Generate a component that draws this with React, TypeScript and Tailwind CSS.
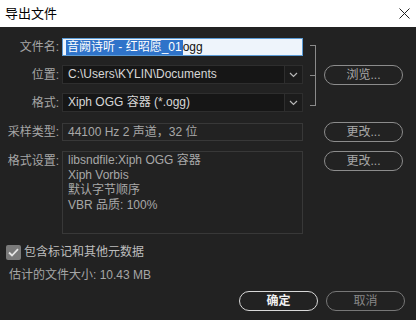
import React from "react";

const font = { fontFamily: '"Liberation Sans", "Noto Sans CJK SC", sans-serif' };

function Chevron() {
  return (
    <svg width="9" height="6" viewBox="0 0 9 6" fill="none">
      <path d="M1 1 L4.5 4.5 L8 1" stroke="#b8b8b8" strokeWidth="1.2" />
    </svg>
  );
}

function PillButton({ children, className = "" }: { children: React.ReactNode; className?: string }) {
  return (
    <div
      className={`flex h-[20px] w-[79px] items-center justify-center rounded-full border text-[12px] leading-none ${className}`}
    >
      {children}
    </div>
  );
}

export default function App() {
  return (
    <div className="flex h-[320px] w-[416px] flex-col overflow-hidden bg-[#222222]" style={font}>
      {/* title bar */}
      <div className="flex h-[27px] items-center justify-between bg-white pl-[5px] pr-[6px]">
        <span className="text-[13px] text-black">导出文件</span>
        <svg width="11" height="11" viewBox="0 0 11 11">
          <path d="M0.5 0.5 L10.5 10.5 M10.5 0.5 L0.5 10.5" stroke="#222" strokeWidth="1" />
        </svg>
      </div>

      {/* top section */}
      <div className="mt-[11px] flex">
        <div className="flex w-[303px] flex-col">
          <div className="flex h-[18px] items-center">
            <span className="w-[62px] pr-[3px] text-right text-[12px] text-[#a6a6a6]">文件名:</span>
            <div className="flex h-[18px] w-[241px] items-center border border-[#5b9bd5] bg-[#eef4fb] pl-[3px]">
              <span className="bg-[#2f73c9] px-px text-[12px] leading-[15px] text-white">音阙诗听 - 红昭愿_01</span>
              <span className="text-[12px] leading-[15px] text-[#111]">ogg</span>
            </div>
          </div>
          <div className="mt-[9px] flex h-[19px] items-center">
            <span className="w-[62px] pr-[3px] text-right text-[12px] text-[#a6a6a6]">位置:</span>
            <div className="flex h-[19px] w-[241px] border border-[#2e2e2e] bg-[#161616]">
              <span className="flex-1 pl-[5px] text-[12px] leading-[17px] text-[#d6d6d6]">C:\Users\KYLIN\Documents</span>
              <div className="flex w-[18px] items-center justify-center border-l border-[#2e2e2e] bg-[#1c1c1c]">
                <Chevron />
              </div>
            </div>
          </div>
          <div className="mt-[9px] flex h-[19px] items-center">
            <span className="w-[62px] pr-[3px] text-right text-[12px] text-[#a6a6a6]">格式:</span>
            <div className="flex h-[19px] w-[241px] border border-[#2e2e2e] bg-[#161616]">
              <span className="flex-1 pl-[5px] text-[12px] leading-[17px] text-[#d6d6d6]">Xiph OGG 容器 (*.ogg)</span>
              <div className="flex w-[18px] items-center justify-center border-l border-[#2e2e2e] bg-[#1c1c1c]">
                <Chevron />
              </div>
            </div>
          </div>
        </div>
        {/* bracket */}
        <div className="ml-[7px] mt-[7px] flex h-[61px] w-[6px] items-center border-y border-r border-[#8a8a8a]">
          <div className="h-px w-[6px] bg-[#8a8a8a]" />
        </div>
        <div className="ml-[8px] flex items-center">
          <PillButton className="border-[#8c8c8c] text-[#a8a8a8]">浏览...</PillButton>
        </div>
      </div>

      {/* sample type */}
      <div className="mt-[10px] flex items-center">
        <span className="w-[62px] pr-[3px] text-right text-[12px] text-[#a6a6a6]">采样类型:</span>
        <div className="flex h-[18px] w-[241px] items-center border border-[#383838] bg-[#222222] pl-[5px]">
          <span className="text-[12px] text-[#a8a8a8]">44100 Hz 2 声道，32 位</span>
        </div>
        <div className="ml-[21px]">
          <PillButton className="border-[#8c8c8c] text-[#a8a8a8]">更改...</PillButton>
        </div>
      </div>

      {/* format settings */}
      <div className="mt-[9px] flex items-start">
        <span className="w-[62px] pr-[3px] pt-[1px] text-right text-[12px] text-[#a6a6a6]">格式设置:</span>
        <div className="flex h-[83px] w-[241px] flex-col border border-[#383838] bg-[#222222] pl-[5px] pt-[1px] text-[12px] text-[#a8a8a8]">
          <div className="h-[15px] leading-[15px]">libsndfile:Xiph OGG 容器</div>
          <div className="h-[15px] leading-[15px]">Xiph Vorbis</div>
          <div className="h-[15px] leading-[15px]">默认字节顺序</div>
          <div className="h-[15px] leading-[15px]">VBR 品质: 100%</div>
        </div>
        <div className="ml-[21px]">
          <PillButton className="border-[#8c8c8c] text-[#a8a8a8]">更改...</PillButton>
        </div>
      </div>

      {/* checkbox */}
      <div className="ml-[6px] mt-[9px] flex items-center">
        <div className="flex h-[15px] w-[15px] items-center justify-center rounded-[2px] bg-[#7a7a7a]">
          <svg width="11" height="9" viewBox="0 0 11 9" fill="none">
            <path d="M1 4.5 L4 7.5 L10 1.2" stroke="#e4e4e4" strokeWidth="1.8" />
          </svg>
        </div>
        <span className="ml-[3px] text-[12px] text-[#bdbdbd]">包含标记和其他元数据</span>
      </div>

      <div className="ml-[9px] mt-[5px] text-[12px] text-[#a6a6a6]">估计的文件大小: 10.43 MB</div>

      {/* buttons */}
      <div className="mt-[7px] flex justify-end gap-[8px] pr-[11px]">
        <PillButton className="border-[#d8d8d8] font-bold text-[#f0f0f0]">确定</PillButton>
        <PillButton className="border-[#777] text-[#888]">取消</PillButton>
      </div>
    </div>
  );
}
